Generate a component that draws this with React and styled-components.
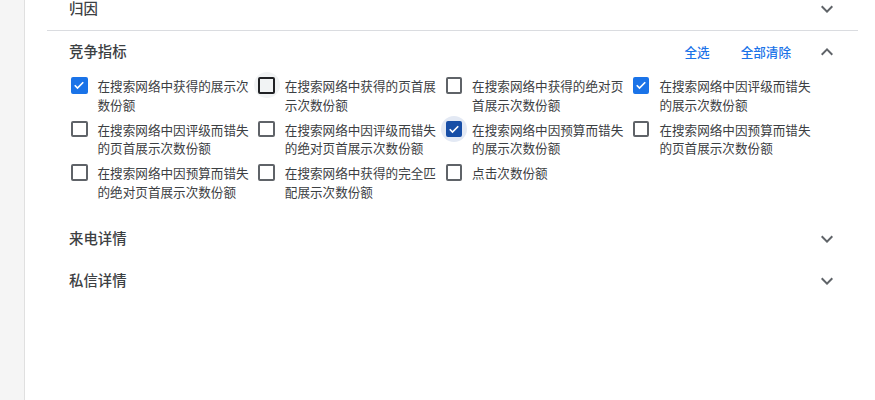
import React, { useState } from "react";
import styled, { createGlobalStyle, css } from "styled-components";

const GlobalStyle = createGlobalStyle`
  html, body {
    margin: 0;
    padding: 0;
    background: #ffffff;
  }
  body {
    font-family: Roboto, "Noto Sans CJK SC", "Noto Sans", sans-serif;
    color: #3c4043;
  }
`;

const METRICS = [
  { id: "is", label: "在搜索网络中获得的展示次数份额", checked: true },
  { id: "top_is", label: "在搜索网络中获得的页首展示次数份额", state: "hover" },
  { id: "abs_top_is", label: "在搜索网络中获得的绝对页首展示次数份额" },
  { id: "lost_rank", label: "在搜索网络中因评级而错失的展示次数份额", checked: true },
  { id: "lost_rank_top", label: "在搜索网络中因评级而错失的页首展示次数份额" },
  { id: "lost_rank_abs", label: "在搜索网络中因评级而错失的绝对页首展示次数份额" },
  { id: "lost_budget", label: "在搜索网络中因预算而错失的展示次数份额", checked: true, state: "focus" },
  { id: "lost_budget_top", label: "在搜索网络中因预算而错失的页首展示次数份额" },
  { id: "lost_budget_abs", label: "在搜索网络中因预算而错失的绝对页首展示次数份额" },
  { id: "exact_is", label: "在搜索网络中获得的完全匹配展示次数份额" },
  { id: "click_share", label: "点击次数份额" },
];

const Chevron = ({ up }) => (
  <svg width="24" height="24" viewBox="0 0 24 24" aria-hidden="true">
    <path
      fill="#5f6368"
      d={
        up
          ? "M7.41 15.41L12 10.83l4.59 4.58L18 14l-6-6-6 6z"
          : "M16.59 8.59L12 13.17 7.41 8.59 6 10l6 6 6-6z"
      }
    />
  </svg>
);

const App = () => {
  const [checked, setChecked] = useState(
    Object.fromEntries(METRICS.map((m) => [m.id, !!m.checked]))
  );

  const toggle = (id) => setChecked((c) => ({ ...c, [id]: !c[id] }));
  const setAll = (value) =>
    setChecked(Object.fromEntries(METRICS.map((m) => [m.id, value])));

  return (
    <>
      <GlobalStyle />
      <Page>
        <Rail />
        <Main>
          <Sections>
            <Section $divider>
              <Header>
                <Title>归因</Title>
                <IconButton>
                  <Chevron />
                </IconButton>
              </Header>
            </Section>

            <Section>
              <Header>
                <Title>竞争指标</Title>
                <Actions>
                  <LinkButton onClick={() => setAll(true)}>全选</LinkButton>
                  <LinkButton onClick={() => setAll(false)}>全部清除</LinkButton>
                  <IconButton>
                    <Chevron up />
                  </IconButton>
                </Actions>
              </Header>
              <Grid>
                {METRICS.map((m) => (
                  <Option key={m.id} onClick={() => toggle(m.id)}>
                    <Control $state={m.state}>
                      <Box $checked={checked[m.id]} $state={m.state}>
                        {checked[m.id] && (
                          <svg width="12" height="12" viewBox="0 0 24 24">
                            <path
                              d="M3.5 12.5l5.5 5.5L20.5 6.5"
                              fill="none"
                              stroke="#fff"
                              strokeWidth="3.4"
                            />
                          </svg>
                        )}
                      </Box>
                    </Control>
                    <Label>{m.label}</Label>
                  </Option>
                ))}
              </Grid>
            </Section>

            <Section>
              <Header>
                <Title>来电详情</Title>
                <IconButton>
                  <Chevron />
                </IconButton>
              </Header>
            </Section>

            <Section>
              <Header>
                <Title>私信详情</Title>
                <IconButton>
                  <Chevron />
                </IconButton>
              </Header>
            </Section>
          </Sections>
        </Main>
      </Page>
    </>
  );
};

export default App;

const Page = styled.div`
  display: flex;
  height: 400px;
  overflow: hidden;
`;

const Rail = styled.div`
  width: 24px;
  flex-shrink: 0;
  background: #f5f5f5;
  border-right: 1px solid #e0e0e0;
`;

const Main = styled.div`
  flex: 1;
  padding: 0 17px 0 22px;
  overflow: hidden;
`;

/* list is scrolled by 12px, so the first header is cut at the top */
const Sections = styled.div`
  margin-top: -12px;
`;

const Section = styled.section`
  ${({ $divider }) =>
    $divider &&
    css`
      border-bottom: 1px solid #dadce0;
    `}
`;

const Header = styled.div`
  height: 42px;
  display: flex;
  align-items: center;
  justify-content: space-between;
  padding: 0 19px 0 22px;
`;

const Title = styled.h3`
  margin: 0;
  padding-bottom: 3px;
  font-size: 14.4px;
  font-weight: 500;
  color: #3c4043;
`;

const Actions = styled.div`
  display: flex;
  align-items: center;
`;

const LinkButton = styled.button`
  border: none;
  background: none;
  padding: 0 0 2px;
  margin-right: 31px;
  font-family: inherit;
  font-size: 12.6px;
  font-weight: 500;
  color: #1a73e8;
  cursor: pointer;

  &:last-of-type {
    margin-right: 24px;
  }
`;

const IconButton = styled.span`
  display: flex;
  width: 24px;
  height: 24px;
  cursor: pointer;
`;

const Grid = styled.div`
  display: grid;
  grid-template-columns: repeat(4, 187.3px);
  row-gap: 6.5px;
  padding: 5px 22px 16px 24px;
`;

const Option = styled.label`
  display: flex;
  align-items: flex-start;
  gap: 10px;
  cursor: pointer;
`;

const Control = styled.span`
  position: relative;
  flex-shrink: 0;
  display: flex;
  margin-top: -1px;

  &::before {
    content: "";
    position: absolute;
    left: 50%;
    top: 50%;
    width: 26px;
    height: 26px;
    border-radius: 50%;
    transform: translate(-50%, -50%);
    background: ${({ $state }) =>
      $state === "hover" ? "#f1f3f4" : $state === "focus" ? "#e3e9f4" : "transparent"};
  }
`;

const Box = styled.span`
  position: relative;
  box-sizing: border-box;
  width: 16.5px;
  height: 16.5px;
  border: 2px solid #5f6368;
  border-radius: 2px;
  display: flex;
  align-items: center;
  justify-content: center;
  background: #fff;

  ${({ $checked }) =>
    $checked &&
    css`
      background: #1a73e8;
      border-color: #1a73e8;
    `}

  ${({ $state, $checked }) =>
    $state === "hover" &&
    css`
      border-color: #202124;
      background: ${$checked ? "#1a73e8" : "transparent"};
    `}

  ${({ $state }) =>
    $state === "focus" &&
    css`
      background: #174ea6;
      border-color: #174ea6;
    `}

  svg {
    display: block;
  }
`;

const Label = styled.span`
  font-size: 12.6px;
  line-height: 18.5px;
  color: #3c4043;
  max-width: 158px;
`;
